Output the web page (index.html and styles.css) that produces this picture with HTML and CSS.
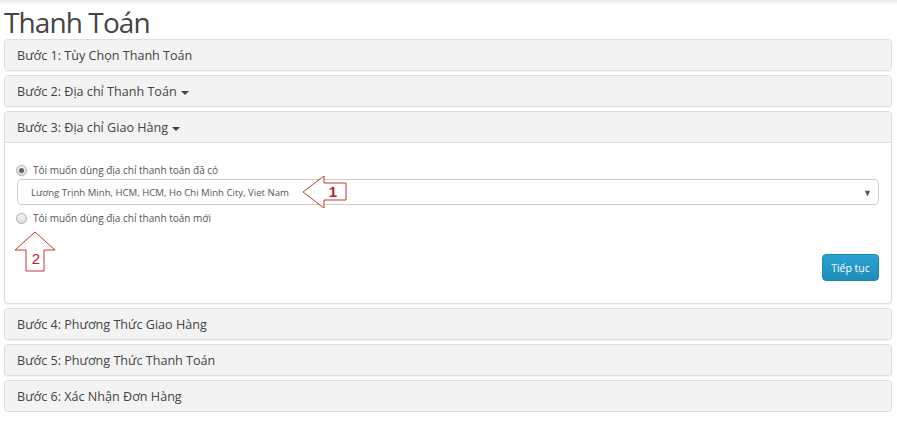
FILE: index.html
```html
<!DOCTYPE html>
<html lang="vi">
<head>
    <meta charset="UTF-8">
    <meta name="viewport" content="width=device-width, initial-scale=1.0">
    <title>Thanh Toán</title>
    <link rel="stylesheet" href="styles.css">
</head>
<body>
    <div class="trang">
        <h1 class="tieude">Thanh Toán</h1>
        <div class="nhom">
            <div class="khung">
                <div class="dau">Bước 1: Tùy Chọn Thanh Toán</div>
            </div>
            <div class="khung">
                <div class="dau">Bước 2: Địa chỉ Thanh Toán <span class="caret"></span></div>
            </div>
            <div class="khung">
                <div class="dau">Bước 3: Địa chỉ Giao Hàng <span class="caret"></span></div>
                <div class="than">
                    <label class="chon"><span class="radio checked"></span>Tôi muốn dùng địa chỉ thanh toán đã có</label>
                    <div class="hop">
                        <span>Lương Trịnh Minh, HCM, HCM, Ho Chi Minh City, Viet Nam</span>
                        <span class="mui">&#9660;</span>
                    </div>
                    <label class="chon chon2"><span class="radio"></span>Tôi muốn dùng địa chỉ thanh toán mới</label>
                    <div class="nut-hang">
                        <button class="nut">Tiếp tục</button>
                    </div>

                    <svg class="muiten muiten1" width="46" height="36" viewBox="0 0 46 36">
                        <polygon points="1,17 22,1 22,8 44,8 44,25 22,25 22,33" fill="#fff" stroke="#c0392b" stroke-width="1"/>
                        <text x="31" y="22" text-anchor="middle">1</text>
                    </svg>
                    <svg class="muiten muiten2" width="44" height="42" viewBox="0 0 44 42">
                        <polygon points="21,1 41,19 30,19 30,40 12,40 12,19 1,19" fill="#fff" stroke="#c0392b" stroke-width="1"/>
                        <text x="22" y="33" text-anchor="middle">2</text>
                    </svg>
                </div>
            </div>
            <div class="khung">
                <div class="dau">Bước 4: Phương Thức Giao Hàng</div>
            </div>
            <div class="khung">
                <div class="dau">Bước 5: Phương Thức Thanh Toán</div>
            </div>
            <div class="khung">
                <div class="dau">Bước 6: Xác Nhận Đơn Hàng</div>
            </div>
        </div>
    </div>
</body>
</html>
```

FILE: styles.css
```css
*{
    margin: 0px;
    padding: 0px;
    box-sizing: border-box;
}
body{
    font-family: 'Open Sans', 'Noto Sans', sans-serif;
    color: #444;
    background: linear-gradient(#e9e9e9, #ffffff 5px) no-repeat;
    background-color: #fff;
}
.trang{
    padding: 0 5px 0 4px;
}
.tieude{
    margin-top: 6px;
    font-size: 28px;
    letter-spacing: -0.9px;
    line-height: 33px;
    font-weight: normal;
    color: #444;
}
.nhom{
    display: flex;
    flex-direction: column;
    gap: 4px;
}
.khung{
    border: 1px solid #ddd;
    border-radius: 4px;
    background-color: #fff;
    box-shadow: 0 1px 1px rgba(0,0,0,0.05);
}
.dau{
    background-color: #f3f3f3;
    height: 30px;
    line-height: 31px;
    padding: 0 12px;
    font-size: 12.6px;
    color: #444;
    border-radius: 3px;
}
.khung .than{
    border-top: 1px solid #ddd;
}
.khung:has(.than) .dau{
    border-radius: 3px 3px 0 0;
}
.caret{
    display: inline-block;
    width: 0;
    height: 0;
    margin-left: 1px;
    vertical-align: middle;
    border-top: 4px solid #444;
    border-left: 4px solid transparent;
    border-right: 4px solid transparent;
}
.than{
    position: relative;
    padding: 17px 12px 22px 12px;
    display: flex;
    flex-direction: column;
}
.chon{
    display: flex;
    align-items: center;
    height: 20px;
    font-size: 10px;
    color: #555;
}
.chon2{
    margin-top: 3px;
}
.radio{
    width: 11px;
    height: 11px;
    border-radius: 50%;
    border: 1px solid #aaa;
    background: linear-gradient(#f4f4f4, #dcdcdc);
    margin: 0 6px 0 -1px;
    position: relative;
}
.radio.checked::after{
    content: "";
    position: absolute;
    left: 2px;
    top: 2px;
    width: 5px;
    height: 5px;
    border-radius: 50%;
    background-color: #666;
}
.hop{
    margin-top: -1px;
    height: 26px;
    border: 1px solid #ccc;
    border-radius: 4px;
    display: flex;
    align-items: center;
    justify-content: space-between;
    padding: 0 6px 0 13px;
    font-size: 9.6px;
    color: #555;
}
.mui{
    font-size: 9px;
    color: #555;
}
.nut-hang{
    display: flex;
    justify-content: flex-end;
    margin-top: 26px;
}
.nut{
    width: 57px;
    height: 27px;
    font-family: 'Open Sans', sans-serif;
    font-size: 10.5px;
    color: #fff;
    background: linear-gradient(#2aa3d3, #1f8cb8);
    border: 1px solid #1d86b1;
    border-radius: 4px;
}
.muiten{
    position: absolute;
    overflow: visible;
}
.muiten text{
    font-family: 'Liberation Sans', sans-serif;
    font-size: 15px;
    fill: #c0202a;
}
.muiten1{
    left: 297px;
    top: 32px;
}
.muiten1 text{
    font-weight: bold;
}
.muiten2{
    left: 9px;
    top: 88px;
}
```
